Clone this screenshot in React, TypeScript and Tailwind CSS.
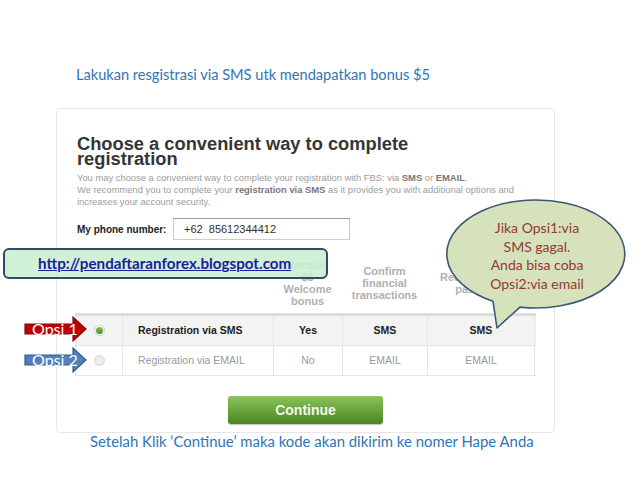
import React from 'react';

const cols = 'grid grid-cols-[47px_151px_69px_85px_108px]';

function Arrow({ label, fill, stroke, top }: { label: string; fill: string; stroke: string; top: number }) {
  return (
    <svg className="absolute left-[22px]" style={{ top }} width="68" height="26" viewBox="0 0 68 26">
      <path d="M3 8 H51 V1 L64 13 L51 25 V18 H3 Z" fill={fill} stroke={stroke} strokeWidth="1.2" />
      <text x="10" y="18.5" fill="#fff" fontSize="16" fontFamily="Lato, 'Liberation Sans', sans-serif">
        {label}
      </text>
    </svg>
  );
}

function Radio({ on }: { on: boolean }) {
  return on ? (
    <span className="flex h-[11px] w-[11px] items-center justify-center rounded-full border border-[#cfcfcf] bg-white">
      <span className="h-[7px] w-[7px] rounded-full bg-gradient-to-b from-[#8cc45a] to-[#4b8a22]" />
    </span>
  ) : (
    <span className="h-[11px] w-[11px] rounded-full border border-[#d6d6d6] bg-[#ececec]" />
  );
}

export default function App() {
  return (
    <div className="relative h-[479px] w-[638px] overflow-hidden bg-white font-['Lato','Liberation_Sans',sans-serif]">
      <div className="flex flex-col">
        <p className="pl-[76px] pt-[66px] text-[14.6px] leading-[18px] text-[#2f75b5]">
          Lakukan resgistrasi via SMS utk mendapatkan bonus $5
        </p>

        {/* screenshot of the registration page */}
        <div className="ml-[56px] mt-[24px] flex h-[325px] w-[499px] flex-col rounded-[4px] border border-[#e8e8e8] px-[18px] pt-[27px] font-['Liberation_Sans',Arial,sans-serif]">
          <h1 className="pl-[2px] text-[18.3px] font-bold leading-[15px] text-[#353535]">
            Choose a convenient way to complete
            <br />
            registration
          </h1>
          <p className="mt-[6px] pl-[2px] text-[9.4px] leading-[12px] text-[#9d9d9d]">
            You may choose a convenient way to complete your registration with FBS: via <b className="text-[#777]">SMS</b> or{' '}
            <b className="text-[#777]">EMAIL</b>.
            <br />
            We recommend you to complete your <b className="text-[#777]">registration via SMS</b> as it provides you with additional options and
            <br />
            increases your account security.
          </p>
          <div className="mt-[10px] flex items-center pl-[2px]">
            <span className="w-[96px] text-[10px] font-bold text-[#222]">My phone number:</span>
            <div className="flex h-[22px] w-[177px] items-center border border-[#cccccc] border-t-[#9a9a9a] pl-[10px] text-[11px] whitespace-pre text-[#333]">
              +62  85612344412
            </div>
          </div>

          <div className={`${cols} mt-[13px] h-[60px] items-center text-center text-[11px] font-bold leading-[12px] text-[#b0b0b0]`}>
            <span />
            <span />
            <span>
              Receive
              <br />
              $5
              <br />
              Welcome
              <br />
              bonus
            </span>
            <span>
              Confirm
              <br />
              financial
              <br />
              transactions
            </span>
            <span>
              Receive trading
              <br />
              password
            </span>
          </div>

          <div className="border-t-[3px] border-[#dcdcdc] text-[10.5px]">
            <div className={`${cols} h-[30px] border-b border-[#e6e6e6] bg-[#f3f3f3] font-bold text-[#222]`}>
              <div className="flex items-center justify-center border-l border-[#e6e6e6]">
                <Radio on />
              </div>
              <div className="flex items-center border-l border-[#e6e6e6] pl-[15px]">Registration via SMS</div>
              <div className="flex items-center justify-center border-l border-[#e6e6e6]">Yes</div>
              <div className="flex items-center justify-center border-l border-[#e6e6e6]">SMS</div>
              <div className="flex items-center justify-center border-x border-[#e6e6e6]">SMS</div>
            </div>
            <div className={`${cols} h-[30px] border-b border-[#e6e6e6] text-[#9a9a9a]`}>
              <div className="flex items-center justify-center border-l border-[#e6e6e6]">
                <Radio on={false} />
              </div>
              <div className="flex items-center border-l border-[#e6e6e6] pl-[15px]">Registration via EMAIL</div>
              <div className="flex items-center justify-center border-l border-[#e6e6e6]">No</div>
              <div className="flex items-center justify-center border-l border-[#e6e6e6]">EMAIL</div>
              <div className="flex items-center justify-center border-x border-[#e6e6e6]">EMAIL</div>
            </div>
          </div>

          <button className="mt-[20px] h-[28px] w-[155px] self-center rounded-[3px] bg-gradient-to-b from-[#8bc35c] via-[#6aa53a] to-[#4a8520] text-[14px] font-bold text-[#f2f7ee] shadow-[0_1px_1px_rgba(0,0,0,0.25)]">
            Continue
          </button>
        </div>

        <p className="pl-[90px] text-[14.9px] leading-[16px] text-[#2f75b5]">
          Setelah Klik ‘Continue’ maka kode akan dikirim ke nomer Hape Anda
        </p>
      </div>

      {/* link callout */}
      <div className="absolute left-[3px] top-[248px] flex h-[31px] w-[325px] items-center rounded-[6px] border-2 border-[#2e4a66] bg-[#c8efcf]/85 pl-[33px]">
        <a className="text-[15.2px] font-bold text-[#1c1c9c] underline">http://pendaftaranforex.blogspot.com</a>
      </div>

      <Arrow label="Opsi 1" fill="#c00000" stroke="#7a1010" top={316} />
      <Arrow label="Opsi 2" fill="#4f81bd" stroke="#385d8a" top={347} />

      {/* speech bubble */}
      <svg className="absolute left-[440px] top-[190px]" width="195" height="145" viewBox="0 0 195 145">
        <path
          d="M80 117.1 A89 54 0 1 0 53 111.3 L57 138 Z"
          fill="#d5e2bb"
          stroke="#3b5877"
          strokeWidth="1.6"
          strokeLinejoin="round"
        />
      </svg>
      <div className="absolute left-[447px] top-[219px] w-[180px] text-center text-[14px] leading-[18.5px] text-[#953734]">
        Jika Opsi1:via
        <br />
        SMS gagal.
        <br />
        Anda bisa coba
        <br />
        Opsi2:via email
      </div>
    </div>
  );
}
